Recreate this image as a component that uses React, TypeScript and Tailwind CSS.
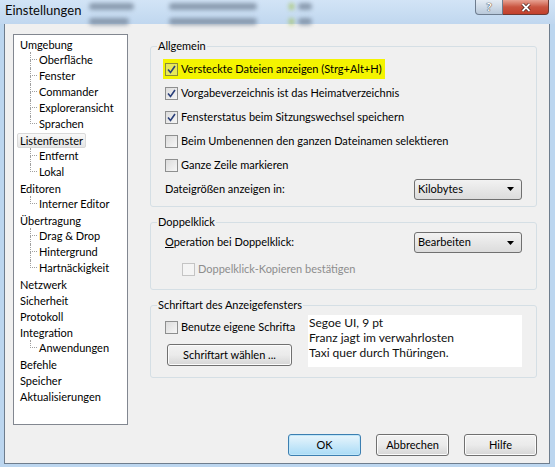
import React from "react";

type TreeNode = { label: string; children?: string[]; selected?: boolean };

const tree: TreeNode[] = [
  { label: "Umgebung", children: ["Oberfläche", "Fenster", "Commander", "Exploreransicht", "Sprachen"] },
  { label: "Listenfenster", selected: true, children: ["Entfernt", "Lokal"] },
  { label: "Editoren", children: ["Interner Editor"] },
  { label: "Übertragung", children: ["Drag & Drop", "Hintergrund", "Hartnäckigkeit"] },
  { label: "Netzwerk" },
  { label: "Sicherheit" },
  { label: "Protokoll" },
  { label: "Integration", children: ["Anwendungen"] },
  { label: "Befehle" },
  { label: "Speicher" },
  { label: "Aktualisierungen" },
];

const CheckMark = () => (
  <svg width="9" height="9" viewBox="0 0 9 9" className="block">
    <path d="M1 4.5 L3.5 7.5 L8 1" fill="none" stroke="#2a3f7a" strokeWidth="1.6" />
  </svg>
);

const Checkbox = ({ checked, disabled, tinted }: { checked?: boolean; disabled?: boolean; tinted?: boolean }) => (
  <span
    className={`w-[13px] h-[13px] shrink-0 flex items-center justify-center border ${
      disabled
        ? "border-[#c4c4c4] bg-[#f4f4f4]"
        : tinted
        ? "border-[#8a8a3a] bg-[#e6e85a]"
        : "border-[#8e8f8f] bg-gradient-to-br from-[#dcdcdc] to-[#f6f6f6]"
    }`}
  >
    {checked && <CheckMark />}
  </span>
);

const CheckRow = ({ label, checked, tinted }: { label: string; checked?: boolean; tinted?: boolean }) => (
  <div className="h-[24px] flex items-center">
    <div className={`flex items-center gap-[3px] h-[20px] pl-[2px] pr-[3px] -ml-[2px] ${tinted ? "bg-[#f4f400]" : ""}`}>
      <Checkbox checked={checked} tinted={tinted} />
      <span>{label}</span>
    </div>
  </div>
);

const Dropdown = ({ value }: { value: string }) => (
  <div className="w-[108px] h-[21px] rounded-[3px] border border-[#707070] bg-gradient-to-b from-[#f2f2f2] to-[#dcdcdc] flex items-center pl-[3px] pr-[7px] justify-between">
    <span>{value}</span>
    <svg width="7" height="4" viewBox="0 0 7 4" className="block">
      <path d="M0 0 H7 L3.5 4 Z" fill="#000" />
    </svg>
  </div>
);

const Button = ({ label, primary, className = "" }: { label: string; primary?: boolean; className?: string }) => (
  <div
    className={`h-[22px] rounded-[3px] border flex items-center justify-center ${
      primary
        ? "border-[#3c7fb1] bg-gradient-to-b from-[#e8f5fc] to-[#a9dbf6] shadow-[inset_0_0_0_1px_#bfe6f9]"
        : "border-[#707070] bg-gradient-to-b from-[#f2f2f2] via-[#ebebeb] to-[#d6d6d6] shadow-[inset_0_0_0_1px_#fcfcfc]"
    } ${className}`}
  >
    {label}
  </div>
);

const Group = ({ title, className = "", children }: { title: string; className?: string; children: React.ReactNode }) => (
  <fieldset className={`border border-[#d5dfe5] rounded-[3px] px-[14px] ${className}`}>
    <legend className="ml-[-8px] px-[1px] leading-[16px]">{title}</legend>
    {children}
  </fieldset>
);

const TreeRow = ({ node }: { node: TreeNode }) => (
  <>
    <div className="h-[16px] flex items-center pl-[3px]">
      <span
        className={`h-[15px] leading-[13px] px-[2px] rounded-[2px] border ${
          node.selected ? "border-[#d9d9d9] bg-gradient-to-b from-[#f8f8f8] to-[#e5e5e5]" : "border-transparent"
        }`}
      >
        {node.label}
      </span>
    </div>
    {node.children?.map((c, i) => {
      const last = i === node.children!.length - 1;
      return (
        <div key={c} className="h-[16px] flex pl-[16px]">
          <div className="w-[7px] flex flex-col">
            <div className="h-[8px] border-l border-b border-dotted border-[#a0a0a0]" />
            <div className={`flex-1 border-l border-dotted ${last ? "border-transparent" : "border-[#a0a0a0]"}`} />
          </div>
          <span className="pl-[2px] leading-[16px]">{c}</span>
        </div>
      );
    })}
  </>
);

// smeared file list showing through the glass frame
const Blur = ({ w, className = "" }: { w: string; className?: string }) => (
  <span className={`h-[7px] rounded-sm bg-[#6f7f93] blur-[2px] opacity-70 ${w} ${className}`} />
);

export default function App() {
  return (
    <div className="w-[555px] h-[467px] bg-[#bcd6ef] flex flex-col text-[11px] text-black font-['Lato','Liberation_Sans',sans-serif] overflow-hidden">
      {/* title bar */}
      <div className="h-[24px] shrink-0 flex items-start bg-gradient-to-b from-[#d2e4f6] to-[#c0d7ef]">
        <div className="flex flex-col pt-[2px] pl-[5px]">
          <span className="text-[13px] leading-[16px] text-[#0a0a0a]">Einstellungen</span>
        </div>
        <div className="flex flex-col gap-[8px] pt-[3px] pl-[8px]">
          <div className="flex items-center">
            <Blur w="w-[45px]" />
            <Blur w="w-[88px]" className="ml-[35px]" />
            <Blur w="w-[5px]" className="ml-[32px] bg-[#9fbf4a]" />
            <Blur w="w-[14px]" className="ml-[4px]" />
          </div>
          <div className="flex items-center">
            <Blur w="w-[40px]" />
            <Blur w="w-[88px]" className="ml-[40px]" />
            <Blur w="w-[5px]" className="ml-[32px] bg-[#9fbf4a]" />
            <Blur w="w-[14px]" className="ml-[4px]" />
          </div>
        </div>
        <div className="ml-auto mr-[6px] flex">
          <div className="w-[28px] h-[15px] rounded-bl-[4px] border border-t-0 border-[#6d7c8e] bg-gradient-to-b from-[#e4ecf4] to-[#b9c9da] flex items-center justify-center">
            <span className="text-[12px] font-bold leading-none text-white [text-shadow:0_0_1px_#333,0_0_1px_#333]">?</span>
          </div>
          <div className="w-[46px] h-[15px] rounded-br-[4px] border border-t-0 border-l-0 border-[#6d3a33] bg-gradient-to-b from-[#e7a293] via-[#c95440] to-[#c3412c] flex items-center justify-center">
            <svg width="10" height="9" viewBox="0 0 10 9">
              <path d="M1.5 1 L8.5 8 M8.5 1 L1.5 8" stroke="#3a1a15" strokeWidth="3.2" />
              <path d="M1.5 1 L8.5 8 M8.5 1 L1.5 8" stroke="#fff" strokeWidth="1.8" />
            </svg>
          </div>
        </div>
      </div>

      {/* client area */}
      <div className="ml-[4px] mr-[5px] h-[440px] border border-t-0 border-[#6e7d8d] bg-[#f0f0f0] flex flex-col">
        <div className="flex pl-[8px] pt-[10px]">
          {/* category tree */}
          <div className="w-[115px] h-[391px] border border-[#828790] bg-white pt-[1px]">
            {tree.map((n) => (
              <TreeRow key={n.label} node={n} />
            ))}
          </div>

          {/* settings pages */}
          <div className="w-[387px] ml-[22px] pt-[4px] flex flex-col gap-[7px]">
            <Group title="Allgemein" className="pt-[3px] pb-[5px]">
              <CheckRow label="Versteckte Dateien anzeigen (Strg+Alt+H)" checked tinted />
              <CheckRow label="Vorgabeverzeichnis ist das Heimatverzeichnis" checked />
              <CheckRow label="Fensterstatus beim Sitzungswechsel speichern" checked />
              <CheckRow label="Beim Umbenennen den ganzen Dateinamen selektieren" />
              <CheckRow label="Ganze Zeile markieren" />
              <div className="h-[24px] flex items-center justify-between">
                <span>Dateigrößen anzeigen in:</span>
                <Dropdown value="Kilobytes" />
              </div>
            </Group>

            <Group title="Doppelklick" className="pt-[2px] pb-[6px]">
              <div className="h-[21px] flex items-center justify-between">
                <span>
                  <span className="underline">O</span>peration bei Doppelklick:
                </span>
                <Dropdown value="Bearbeiten" />
              </div>
              <div className="h-[30px] flex items-center gap-[3px] pl-[17px] pt-[3px] text-[#8d8d8d]">
                <Checkbox disabled />
                <span>Doppelklick-Kopieren bestätigen</span>
              </div>
            </Group>

            <Group title="Schriftart des Anzeigefensters" className="pt-[2px] pb-[10px]">
              <div className="flex">
                <div className="w-[143px] flex flex-col">
                  <div className="h-[24px] flex items-center gap-[3px]">
                    <Checkbox />
                    <span className="whitespace-nowrap">Benutze eigene Schrifta</span>
                  </div>
                  <Button label="Schriftart wählen ..." className="w-[125px] ml-[2px] mt-[5px]" />
                </div>
                <div className="w-[214px] h-[52px] bg-white pl-[1px] leading-[15px] text-[12px] text-[#101010]">
                  <div>Segoe UI, 9 pt</div>
                  <div>Franz jagt im verwahrlosten</div>
                  <div>Taxi quer durch Thüringen.</div>
                </div>
              </div>
            </Group>
          </div>
        </div>

        {/* dialog buttons */}
        <div className="mt-auto mb-[7px] flex justify-end gap-[15px] pr-[12px]">
          <Button label="OK" primary className="w-[73px]" />
          <Button label="Abbrechen" className="w-[73px]" />
          <Button label="Hilfe" className="w-[73px]" />
        </div>
      </div>
    </div>
  );
}
